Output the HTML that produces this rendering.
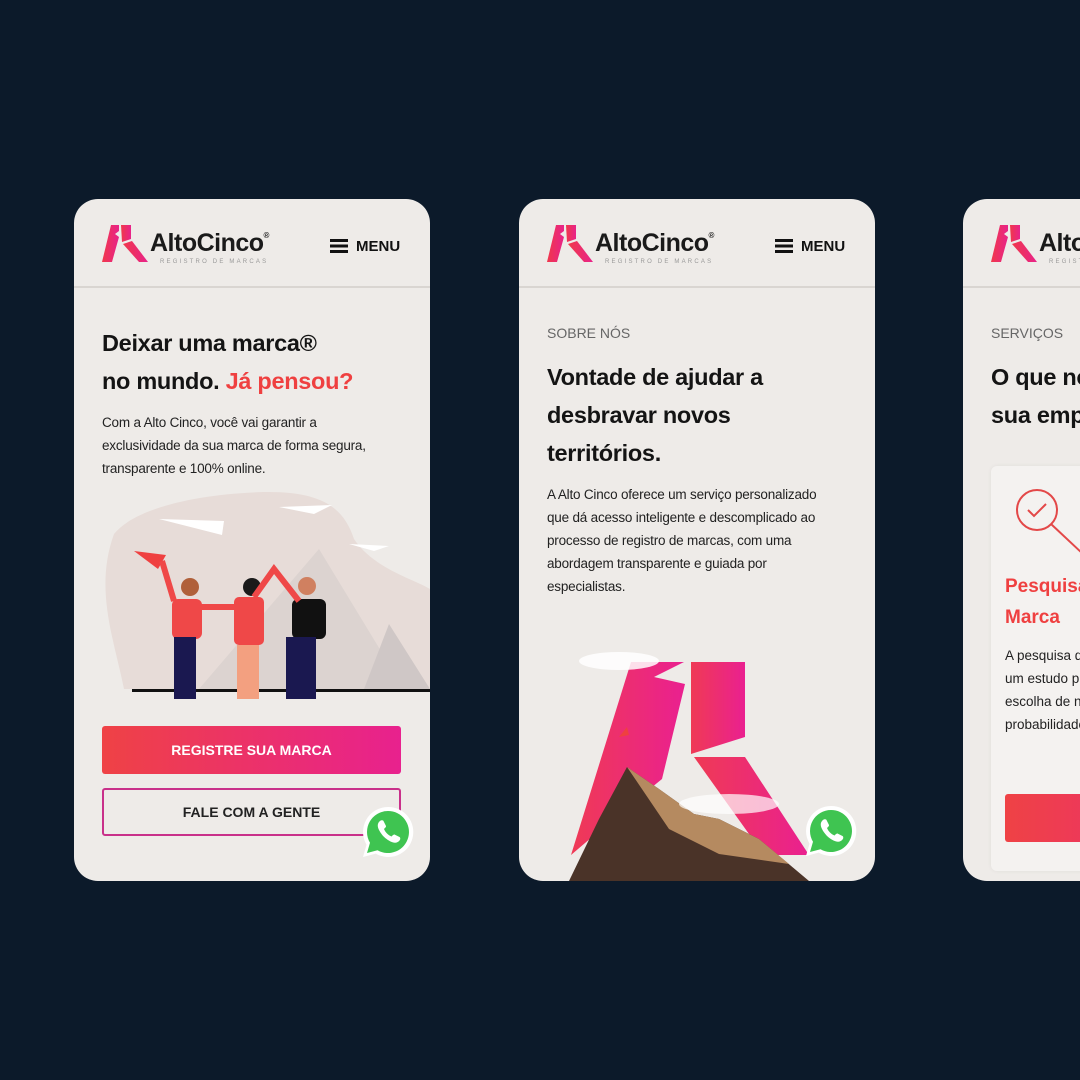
<!DOCTYPE html>
<html><head><meta charset="utf-8"><style>
*{margin:0;padding:0;box-sizing:border-box}
body{width:1080px;height:1080px;background:#0c1a2a;position:relative;overflow:hidden;font-family:"Liberation Sans",sans-serif;color:#141414}
.card{position:absolute;top:199px;width:356px;height:682px;background:#eeebe8;border-radius:24px;overflow:hidden}
.hdr{position:absolute;left:0;top:0;width:356px;height:89px;border-bottom:2px solid #d9d5d1}
.logo{position:absolute;left:28px;top:26px}
.brand{position:absolute;left:76px;top:30px;font-size:25px;font-weight:bold;letter-spacing:-0.5px;color:#1a1a1a;white-space:nowrap}
.brand sup{font-size:8px;vertical-align:top;position:relative;top:2px}
.sub{position:absolute;left:86px;top:60px;font-size:6px;letter-spacing:2.2px;color:#999;white-space:nowrap}
.menu{position:absolute;left:256px;top:39px;font-size:15px;font-weight:bold;color:#111}
.bars{display:inline-block;width:18px;height:14px;vertical-align:-2px;margin-right:8px;background:linear-gradient(#111 0 3px,transparent 3px 5.5px,#111 5.5px 8.5px,transparent 8.5px 11px,#111 11px 14px)}
h1{position:absolute;left:28px;font-size:23.5px;font-weight:bold;line-height:38px;letter-spacing:-0.3px}
.p{position:absolute;left:28px;font-size:13.5px;line-height:23px;color:#222;letter-spacing:-0.2px}
.lbl{position:absolute;left:28px;top:126px;font-size:14px;color:#666}
.wa{position:absolute;width:54px;height:54px}
</style></head><body>

<div class="card" style="left:74px">
 <div class="hdr">
  <svg class="logo" width="46" height="37" viewBox="0 0 46 37"><defs><linearGradient id="lg" x1="0" x2="1"><stop offset="0" stop-color="#f0384a"/><stop offset="1" stop-color="#e8238a"/></linearGradient></defs><polygon fill="url(#lg)" points="9,0 17,0 17,6 13,9 17,12 10,37 0,37"/><polygon fill="url(#lg)" points="19,0 29,0 29,14 20,17"/><polygon fill="url(#lg)" points="21,19 30,16 46,37 37,37"/></svg>
  <div class="brand">AltoCinco<sup>®</sup></div>
  <div class="sub">REGISTRO DE MARCAS</div>
  <div class="menu"><span class="bars"></span>MENU</div>
 </div>
 <h1 style="top:125px">Deixar uma marca®<br>no mundo. <span style="color:#ef4040">Já pensou?</span></h1>
 <div class="p" style="top:212px">Com a Alto Cinco, você vai garantir a<br>exclusividade da sua marca de forma segura,<br>transparente e 100% online.</div>
 <svg style="position:absolute;left:0;top:290px" width="356" height="225" viewBox="0 0 356 225">
  <path d="M40 45 C60 20 120 5 190 3 C250 2 270 20 280 50 C300 80 340 90 356 100 L356 200 L50 200 C40 150 20 100 40 45Z" fill="#e7dcd8"/>
  <polygon points="85,30 150,32 148,46" fill="#fff"/><polygon points="205,18 258,16 240,25" fill="#fff"/><polygon points="275,55 315,57 300,62" fill="#fff"/>
  <polygon points="125,200 245,60 330,200" fill="#dcd3d0"/><polygon points="290,200 315,135 356,200" fill="#cfc7c6"/>
  <rect x="58" y="200" width="298" height="3" fill="#111"/>
  <polygon points="60,62 92,66 84,80" fill="#ef4040"/>
  <rect x="98" y="110" width="30" height="40" rx="6" fill="#ef4848"/><rect x="100" y="148" width="22" height="62" fill="#1a1850"/><circle cx="116" cy="98" r="9" fill="#b0603a"/>
  <rect x="160" y="108" width="30" height="48" rx="5" fill="#ef4848"/><rect x="163" y="156" width="22" height="54" fill="#f3a080"/><circle cx="178" cy="98" r="9" fill="#1a1a1a"/>
  <rect x="218" y="110" width="34" height="40" rx="6" fill="#111"/><rect x="212" y="148" width="30" height="62" fill="#1a1850"/><circle cx="233" cy="97" r="9" fill="#d08060"/>
  <path d="M88 72 L100 112 M180 108 L200 80 L225 112 M126 118 L160 118" stroke="#ef4848" stroke-width="6" fill="none"/>
 </svg>
 <div style="position:absolute;left:28px;top:527px;width:299px;height:48px;border-radius:3px;background:linear-gradient(90deg,#ef4245,#e8218e);color:#fff;font-weight:bold;font-size:14px;text-align:center;line-height:48px">REGISTRE SUA MARCA</div>
 <div style="position:absolute;left:28px;top:589px;width:299px;height:48px;border:2px solid #c9308a;border-radius:3px;font-weight:bold;font-size:14px;text-align:center;line-height:44px;color:#222">FALE COM A GENTE</div>
 <svg class="wa" style="left:287px;top:606px" viewBox="0 0 54 54"><path d="M27 2a25 25 0 0 0-21.5 37.7L2 52l12.7-3.4A25 25 0 1 0 27 2z" fill="#fff"/><path d="M27 6a21 21 0 0 0-18 31.8L6 48l10.5-2.8A21 21 0 1 0 27 6z" fill="#3fc451"/><path d="M19 16c1-1 3-1 3.5 0l2.5 5c.3 1-1 2-2 3 1.5 3.5 4 6 7.5 7.5 1-1 2-2.3 3-2l5 2.5c1 .5 1 2.5 0 3.5-2 2.5-5 3-9 1-5-2.5-9-6.5-11.5-11.5-2-4-1.5-7 1-9z" fill="#fff"/></svg>
</div>

<div class="card" style="left:519px">
 <div class="hdr">
  <svg class="logo" width="46" height="37" viewBox="0 0 46 37"><polygon fill="url(#lg)" points="9,0 17,0 17,6 13,9 17,12 10,37 0,37"/><polygon fill="url(#lg)" points="19,0 29,0 29,14 20,17"/><polygon fill="url(#lg)" points="21,19 30,16 46,37 37,37"/></svg>
  <div class="brand">AltoCinco<sup>®</sup></div>
  <div class="sub">REGISTRO DE MARCAS</div>
  <div class="menu"><span class="bars"></span>MENU</div>
 </div>
 <div class="lbl">SOBRE NÓS</div>
 <h1 style="top:159px">Vontade de ajudar a<br>desbravar novos<br>territórios.</h1>
 <div class="p" style="top:284px">A Alto Cinco oferece um serviço personalizado<br>que dá acesso inteligente e descomplicado ao<br>processo de registro de marcas, com uma<br>abordagem transparente e guiada por<br>especialistas.</div>
 <svg style="position:absolute;left:0;top:440px" width="356" height="242" viewBox="0 0 356 242">
  <defs><linearGradient id="g2" x1="0" x2="1"><stop offset="0" stop-color="#ef3a55"/><stop offset="1" stop-color="#ea2090"/></linearGradient></defs>
  <polygon fill="url(#g2)" points="112,23 165,23 135,38 166,45 143,140 100,175 52,216"/>
  <polygon fill="url(#g2)" points="172,23 226,23 226,98 172,115"/>
  <polygon fill="url(#g2)" points="175,118 226,118 290,216 245,216"/>
  <path d="M50 242 L80 180 L108 128 L140 150 L175 175 L200 180 L240 200 L290 242Z" fill="#4a3328"/>
  <path d="M108 128 L140 150 L175 175 L200 180 L240 200 L270 225 L200 215 L150 190Z" fill="#b58a60"/>
  <ellipse cx="100" cy="22" rx="40" ry="9" fill="#fff" opacity=".85"/><ellipse cx="210" cy="165" rx="50" ry="10" fill="#fff" opacity=".7"/>
  <polygon points="108,88 100,98 110,96" fill="#ef4040"/>
 </svg>
 <svg class="wa" style="left:285px;top:605px" viewBox="0 0 54 54"><path d="M27 2a25 25 0 0 0-21.5 37.7L2 52l12.7-3.4A25 25 0 1 0 27 2z" fill="#fff"/><path d="M27 6a21 21 0 0 0-18 31.8L6 48l10.5-2.8A21 21 0 1 0 27 6z" fill="#3fc451"/><path d="M19 16c1-1 3-1 3.5 0l2.5 5c.3 1-1 2-2 3 1.5 3.5 4 6 7.5 7.5 1-1 2-2.3 3-2l5 2.5c1 .5 1 2.5 0 3.5-2 2.5-5 3-9 1-5-2.5-9-6.5-11.5-11.5-2-4-1.5-7 1-9z" fill="#fff"/></svg>
</div>

<div class="card" style="left:963px;width:117px;border-radius:24px 0 0 24px">
 <div class="hdr" style="width:117px">
  <svg class="logo" width="46" height="37" viewBox="0 0 46 37"><polygon fill="url(#lg)" points="9,0 17,0 17,6 13,9 17,12 10,37 0,37"/><polygon fill="url(#lg)" points="19,0 29,0 29,14 20,17"/><polygon fill="url(#lg)" points="21,19 30,16 46,37 37,37"/></svg>
  <div class="brand">AltoCinco</div>
  <div class="sub">REGISTRO DE MARCAS</div>
 </div>
 <div class="lbl">SERVIÇOS</div>
 <h1 style="top:159px;white-space:nowrap">O que nós fazemos pela<br>sua empresa</h1>
 <div style="position:absolute;left:28px;top:267px;width:330px;height:405px;background:#f4f2f0;border-radius:6px;box-shadow:0 0 4px rgba(0,0,0,.06)">
  <svg style="position:absolute;left:22px;top:20px" width="80" height="70" viewBox="0 0 80 70"><circle cx="24" cy="24" r="20" fill="none" stroke="#e34848" stroke-width="2"/><path d="M15 24 l6 6 l12 -12" fill="none" stroke="#e34848" stroke-width="2"/><path d="M38 38 L70 68" stroke="#e34848" stroke-width="2"/></svg>
  <div style="position:absolute;left:14px;top:105px;font-size:19px;font-weight:bold;color:#ef4040;line-height:31px;white-space:nowrap">Pesquisa de<br>Marca</div>
  <div style="position:absolute;left:14px;top:178px;font-size:13.5px;line-height:23px;color:#222;white-space:nowrap">A pesquisa de marca é<br>um estudo prévio da<br>escolha de nome e<br>probabilidade</div>
  <div style="position:absolute;left:14px;top:328px;width:300px;height:48px;border-radius:3px;background:linear-gradient(90deg,#ef4245,#e8218e)"></div>
 </div>
</div>
</body></html>
